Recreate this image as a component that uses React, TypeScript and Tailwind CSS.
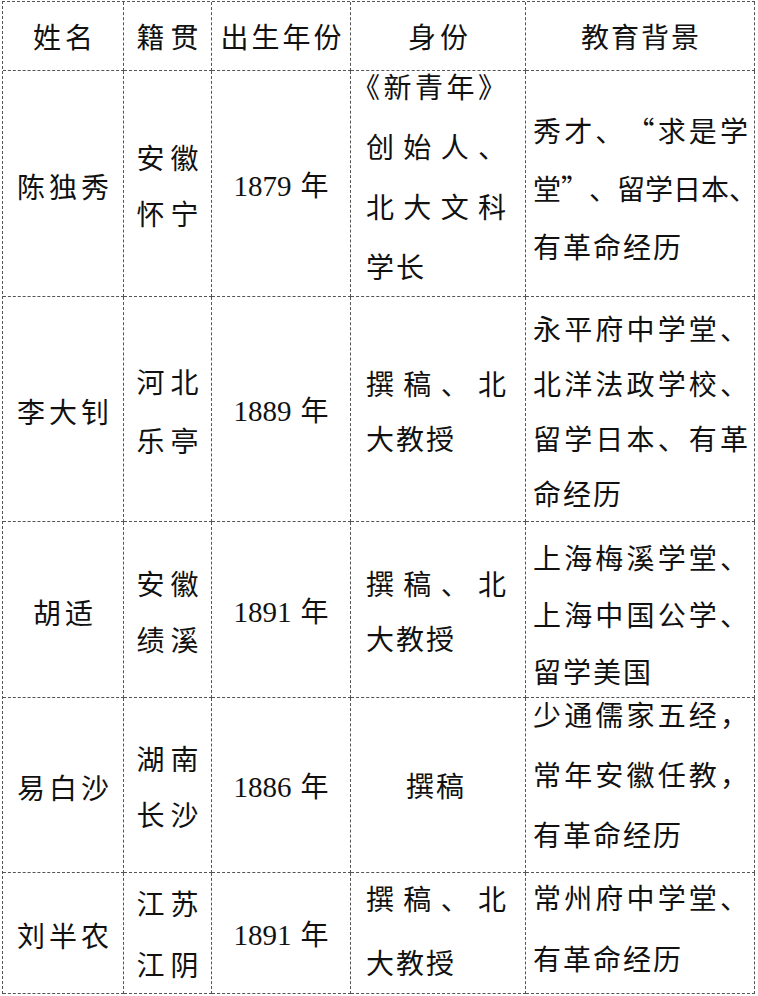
import React from "react";

type Line = { t: string; j?: boolean; cls?: string };

type Row = {
  name: string;
  place: [string, string];
  placeCls: string;
  year: string;
  role: Line[];
  roleCls: string;
  edu: Line[];
  eduCls: string;
};

const rows: Row[] = [
  {
    name: "陈独秀",
    place: ["安徽", "怀宁"],
    placeCls: "leading-[56px] pt-[2px]",
    year: "1879",
    role: [
      { t: "《新青年》", j: true, cls: "-ml-[14px]" },
      { t: "创始人、", j: true },
      { t: "北大文科", j: true },
      { t: "学长" },
    ],
    roleCls: "leading-[60px] pb-[16px]",
    edu: [
      { t: "秀才、“求是学", j: true },
      { t: "堂”、留学日本、", j: true },
      { t: "有革命经历" },
    ],
    eduCls: "leading-[58px] pt-[8px]",
  },
  {
    name: "李大钊",
    place: ["河北", "乐亭"],
    placeCls: "leading-[59px] pt-[3px]",
    year: "1889",
    role: [{ t: "撰稿、北", j: true }, { t: "大教授" }],
    roleCls: "leading-[55px] pt-[4px]",
    edu: [
      { t: "永平府中学堂、", j: true },
      { t: "北洋法政学校、", j: true },
      { t: "留学日本、有革", j: true },
      { t: "命经历" },
    ],
    eduCls: "leading-[55px] pt-[3px]",
  },
  {
    name: "胡适",
    place: ["安徽", "绩溪"],
    placeCls: "leading-[56px] pt-[2px]",
    year: "1891",
    role: [{ t: "撰稿、北", j: true }, { t: "大教授" }],
    roleCls: "leading-[55px] pt-[3px]",
    edu: [
      { t: "上海梅溪学堂、", j: true },
      { t: "上海中国公学、", j: true },
      { t: "留学美国" },
    ],
    eduCls: "leading-[57px] pt-[10px]",
  },
  {
    name: "易白沙",
    place: ["湖南", "长沙"],
    placeCls: "leading-[56px] pt-[2px]",
    year: "1886",
    role: [{ t: "撰稿" }],
    roleCls: "items-center pl-[4px]",
    edu: [
      { t: "少通儒家五经，", j: true },
      { t: "常年安徽任教，", j: true },
      { t: "有革命经历" },
    ],
    eduCls: "leading-[60px] pb-[22px]",
  },
  {
    name: "刘半农",
    place: ["江苏", "江阴"],
    placeCls: "leading-[61px] pt-[2px]",
    year: "1891",
    role: [{ t: "撰稿、北", j: true }, { t: "大教授" }],
    roleCls: "leading-[64px] pb-[6px]",
    edu: [{ t: "常州府中学堂、", j: true }, { t: "有革命经历" }],
    eduCls: "leading-[61px] pb-[10px]",
  },
];

const cell = "flex flex-col justify-center border-r border-b border-dashed border-[#555]";

function Lines({ lines }: { lines: Line[] }) {
  return (
    <>
      {lines.map((l, i) =>
        l.j ? (
          <div key={i} className={`flex justify-between ${l.cls ?? ""}`}>
            {Array.from(l.t).map((c, k) => (
              <span key={k}>{c}</span>
            ))}
          </div>
        ) : (
          <div key={i} className={`tracking-[2px] ${l.cls ?? ""}`}>
            {l.t}
          </div>
        )
      )}
    </>
  );
}

export default function App() {
  return (
    <div
      lang="zh-CN"
      className="min-h-[996px] w-[758px] bg-white pt-[1px] pl-[2px] font-['Noto_Sans_CJK_SC',sans-serif] text-[28px] text-[#111]"
    >
      <div className="grid w-fit grid-cols-[121px_88px_139px_175px_229px] grid-rows-[69px_226px_225px_176px_175px_121px] border-l border-t border-dashed border-[#555]">
        <div className={`${cell} items-center pl-[4px] tracking-[4px]`}>姓名</div>
        <div className={`${cell} items-center pl-[6px] tracking-[6px]`}>籍贯</div>
        <div className={`${cell} items-center pl-[3px] tracking-[3px]`}>出生年份</div>
        <div className={`${cell} items-center pl-[4px] tracking-[4px]`}>身份</div>
        <div className={`${cell} items-center pl-[2px] tracking-[2px]`}>教育背景</div>

        {rows.map((r) => (
          <React.Fragment key={r.name}>
            <div className={`${cell} items-center pt-[4px] pl-[4px] tracking-[4px]`}>{r.name}</div>
            <div className={`${cell} items-center pl-[6px] tracking-[6px] ${r.placeCls}`}>
              <div>{r.place[0]}</div>
              <div>{r.place[1]}</div>
            </div>
            <div className={`${cell} items-center pt-[4px]`}>
              <div className="whitespace-nowrap">
                <span className="font-['Liberation_Serif',serif] text-[29px]">{r.year}</span>
                <span className="ml-[9px]">年</span>
              </div>
            </div>
            <div className={`${cell} pl-[15px] pr-[19px] ${r.roleCls}`}>
              <Lines lines={r.role} />
            </div>
            <div className={`${cell} pl-[7px] pr-[6px] ${r.eduCls}`}>
              <Lines lines={r.edu} />
            </div>
          </React.Fragment>
        ))}
      </div>
    </div>
  );
}
